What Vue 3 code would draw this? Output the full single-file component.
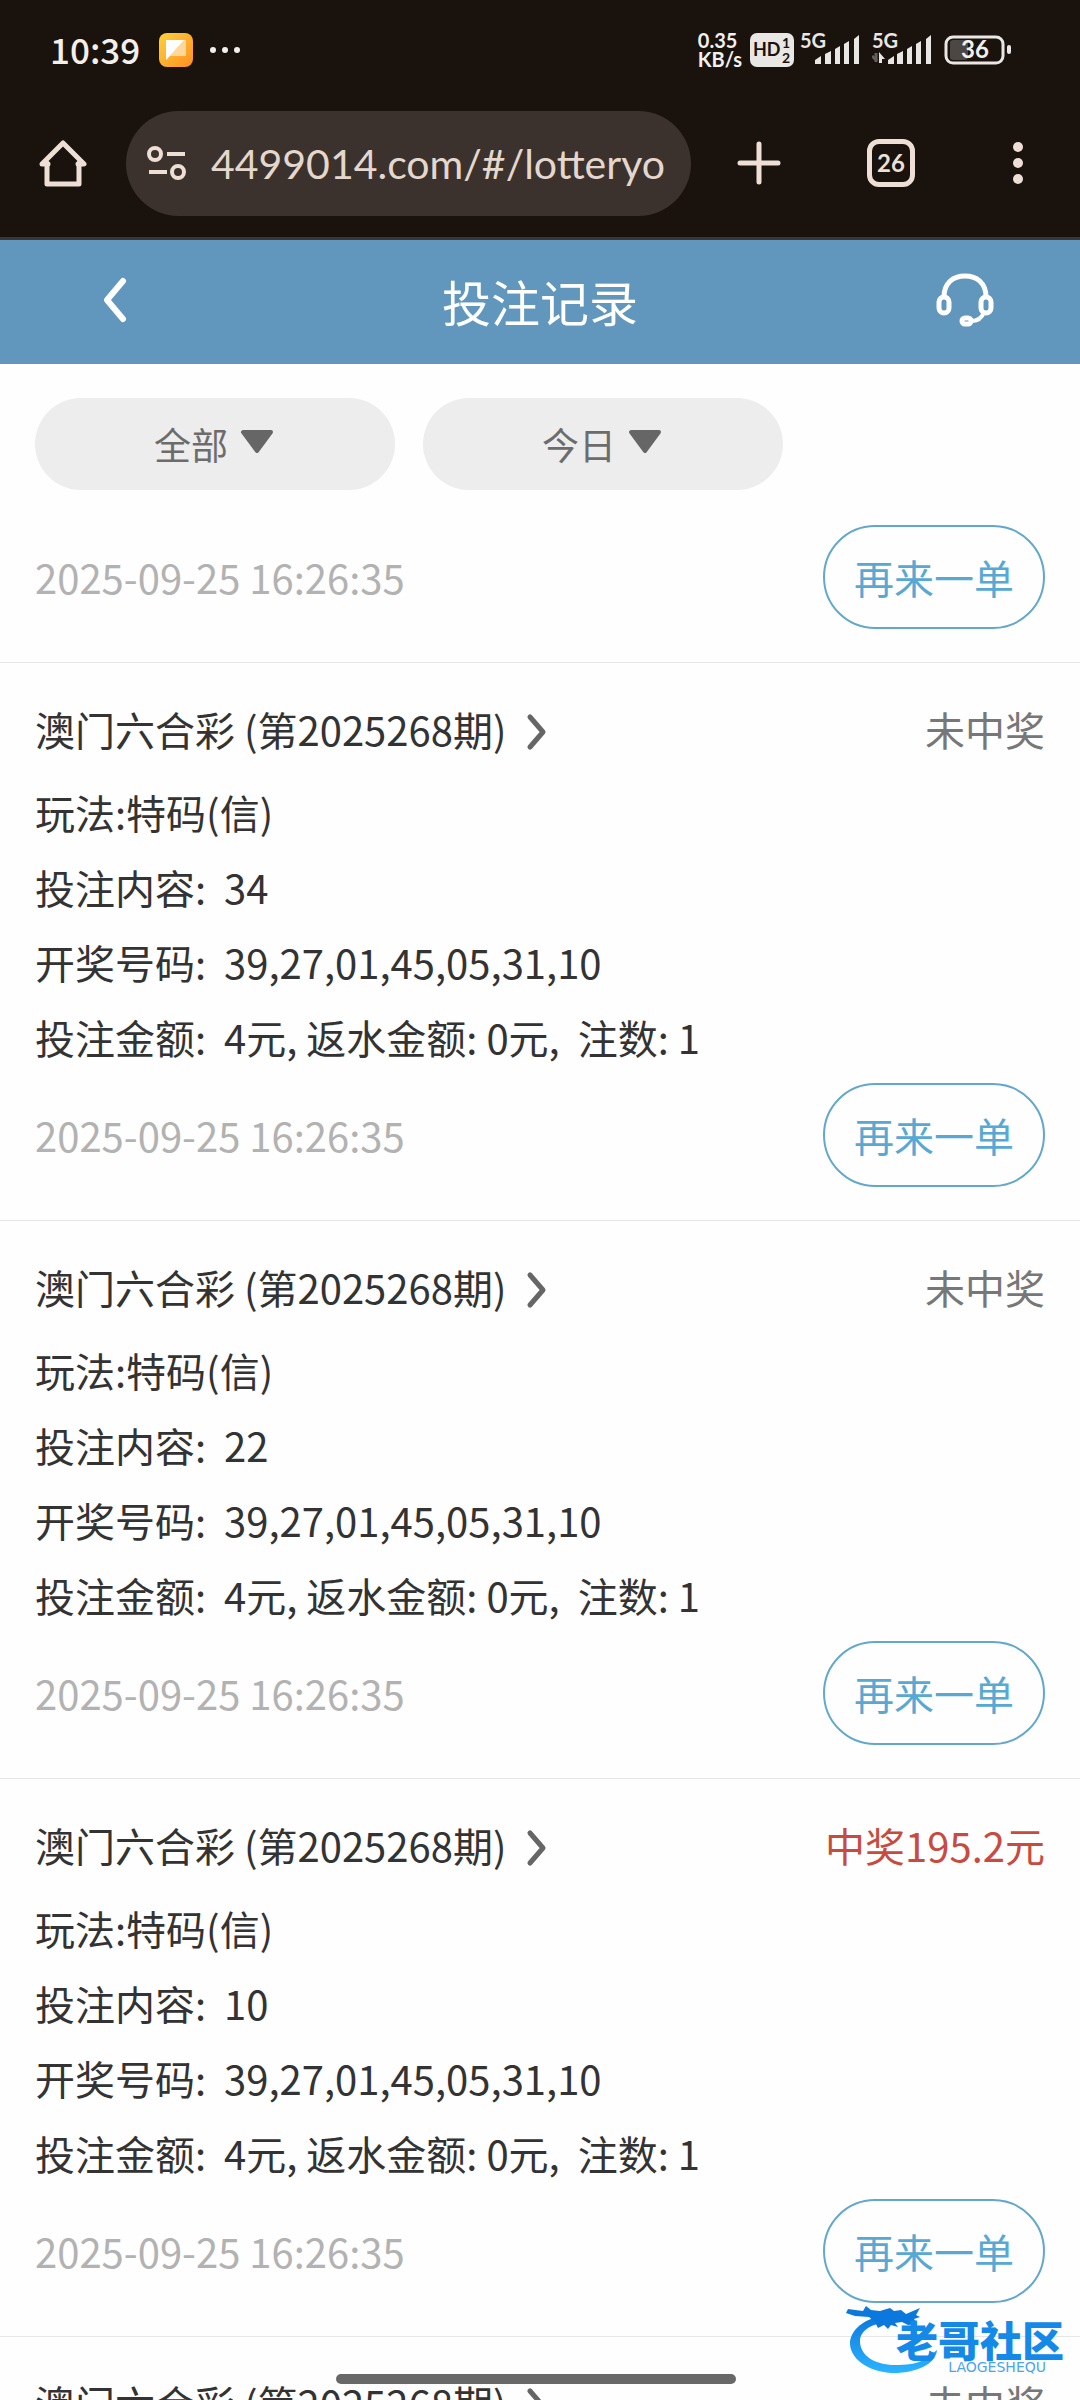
<script setup>
import { ref } from 'vue'

const url = ref('4499014.com/#/lotteryo')
const category = ref('全部')
const day = ref('今日')

const bet = (number, result, won = false) => ({
  title: '澳门六合彩 (第2025268期)',
  play: '特码(信)',
  number,
  draw: '39,27,01,45,05,31,10',
  result,
  won,
  time: '2025-09-25 16:26:35',
})

const previous = { time: '2025-09-25 16:26:35' }
const bets = [
  bet('34', '未中奖'),
  bet('22', '未中奖'),
  bet('10', '中奖195.2元', true),
]
const next = { title: '澳门六合彩 (第2025268期)', result: '未中奖' }
</script>

<template>
  <div class="screen">
    <div class="statusbar">
      <span class="clock">10:39</span>
      <svg class="app" width="34" height="34" viewBox="0 0 34 34">
        <defs>
          <linearGradient id="appfill" x1="0" y1="0" x2="1" y2="1">
            <stop offset="0" stop-color="#ffd13a" />
            <stop offset="1" stop-color="#ff8f22" />
          </linearGradient>
        </defs>
        <rect width="34" height="34" rx="8" fill="url(#appfill)" />
        <path d="M7 7h20v16H11l-4 4z" fill="#ffd79a" />
        <path d="M7 7h18L7 27z" fill="#fff" />
      </svg>
      <svg class="more" width="32" height="8" viewBox="0 0 32 8" fill="#f3f0ec">
        <circle cx="4" cy="4" r="3" /><circle cx="16" cy="4" r="3" /><circle cx="28" cy="4" r="3" />
      </svg>
      <span class="speed"><span>0.35</span><span>KB/s</span></span>
      <svg class="hd" width="44" height="34" viewBox="0 0 44 34">
        <rect width="44" height="34" rx="7" fill="#e9e7e3" />
        <g fill="#19120d" font-weight="700">
          <text x="3" y="23" font-size="18">HD</text>
          <text x="32" y="15" font-size="14">1</text>
          <text x="32" y="30" font-size="14">2</text>
        </g>
      </svg>
      <svg class="signal" width="60" height="38" viewBox="0 -2 60 38" fill="#e9e7e3">
        <text x="0" y="15" font-size="20" font-weight="700">5G</text>
        <path d="M15 31v-4l6-4v8zM25 31V21l6-3v13zM35 31V16l5-3v18zM44 31V11l5-3v23zM54 31V6l5-4v29z" />
      </svg>
      <svg class="signal" width="60" height="38" viewBox="0 -2 60 38" fill="#e9e7e3">
        <text x="0" y="15" font-size="20" font-weight="700">5G</text>
        <path d="M4 20v9M5 28l-5-5" stroke="#625e5a" stroke-width="3" fill="none" />
        <path d="M7 19l6 7h-3v4H7z" />
        <path d="M16 31v-4l6-4v8zM25 31V21l6-3v13zM35 31V16l5-3v18zM44 31V11l5-3v23zM54 31V6l5-4v29z" />
      </svg>
      <svg class="battery" width="68" height="30" viewBox="0 0 68 30">
        <rect x="6" y="5" width="18" height="20" rx="3" fill="#4b4743" />
        <rect x="2" y="2" width="57" height="26" rx="7" fill="none" stroke="#e9e7e3" stroke-width="3" />
        <rect x="63" y="10" width="4" height="9" rx="2" fill="#e9e7e3" />
        <text x="31" y="23" font-size="24" font-weight="700" text-anchor="middle" fill="#f3f0ec">36</text>
      </svg>
    </div>

    <div class="toolbar">
      <button class="home" type="button" aria-label="主页">
        <svg width="48" height="48" viewBox="0 0 48 48" fill="none" stroke="#eedfd6" stroke-width="5" stroke-linejoin="round" stroke-linecap="round">
          <path d="M8 24v21h32V24" />
          <path d="M9 25H3L24 4l21 21h-6" />
        </svg>
      </button>
      <label class="omnibox">
        <svg width="40" height="36" viewBox="0 0 40 36" fill="none" stroke="#eedfd6" stroke-width="4">
          <circle cx="8" cy="9" r="6" /><path d="M20 9h18M2 27h18" /><circle cx="31" cy="27" r="6" />
        </svg>
        <input v-model="url" type="text" aria-label="网址" />
      </label>
      <button class="plus" type="button" aria-label="新标签页">
        <svg width="44" height="44" viewBox="0 0 44 44" stroke="#eedfd6" stroke-width="5" stroke-linecap="round">
          <path d="M22 3v38M3 22h38" />
        </svg>
      </button>
      <button class="tabs" type="button" aria-label="标签页"><span>26</span></button>
      <button class="menu" type="button" aria-label="菜单">
        <svg width="12" height="44" viewBox="0 0 12 44" fill="#eedfd6">
          <circle cx="6" cy="6" r="5" /><circle cx="6" cy="22" r="5" /><circle cx="6" cy="38" r="5" />
        </svg>
      </button>
    </div>

    <header class="header">
      <button class="back" type="button" aria-label="返回">
        <svg width="24" height="46" viewBox="0 0 24 46" fill="none" stroke="#fff" stroke-width="6" stroke-linecap="round" stroke-linejoin="round">
          <path d="M20 4L4 23l16 19" />
        </svg>
      </button>
      <h1>投注记录</h1>
      <button class="service" type="button" aria-label="客服">
        <svg width="58" height="54" viewBox="0 0 58 54" fill="none" stroke="#fff" stroke-width="5">
          <path d="M8 24C8 10 17 3 29 3s21 7 21 21" />
          <rect x="3" y="24" width="10" height="16" rx="5" />
          <rect x="45" y="24" width="10" height="16" rx="5" />
          <rect x="26" y="45" width="9" height="6" rx="3" />
          <path d="M35 48c7 0 11-3 13-9" stroke-width="4" />
        </svg>
      </button>
    </header>

    <main>
      <div class="filters">
        <label class="pill">
          <select v-model="category" aria-label="类型">
            <option>全部</option>
          </select>
          <svg class="caret" width="34" height="26" viewBox="0 0 34 26"><path d="M3 3h28L17 22z" fill="#666" stroke="#666" stroke-width="4" stroke-linejoin="round" /></svg>
        </label>
        <label class="pill">
          <select v-model="day" aria-label="日期">
            <option>今日</option>
          </select>
          <svg class="caret" width="34" height="26" viewBox="0 0 34 26"><path d="M3 3h28L17 22z" fill="#666" stroke="#666" stroke-width="4" stroke-linejoin="round" /></svg>
        </label>
      </div>

      <article class="bet">
        <div class="foot">
          <time>{{ previous.time }}</time>
          <button class="again" type="button">再来一单</button>
        </div>
      </article>

      <article v-for="(b, i) in bets" :key="i" class="bet full">
        <div class="head">
          <a href="#">
            {{ b.title }}
            <svg width="22" height="38" viewBox="0 0 22 38" fill="none" stroke="#666" stroke-width="5" stroke-linecap="round" stroke-linejoin="round">
              <path d="M4 4l13 15L4 34" />
            </svg>
          </a>
          <span class="result" :class="{ won: b.won }">{{ b.result }}</span>
        </div>
        <p>玩法:{{ b.play }}</p>
        <p>投注内容:&nbsp; {{ b.number }}</p>
        <p>开奖号码:&nbsp; {{ b.draw }}</p>
        <p>投注金额:&nbsp; 4元, 返水金额: 0元,&nbsp; 注数: 1</p>
        <div class="foot">
          <time>{{ b.time }}</time>
          <button class="again" type="button">再来一单</button>
        </div>
      </article>

      <article class="bet full">
        <div class="head">
          <a href="#">
            {{ next.title }}
            <svg width="22" height="38" viewBox="0 0 22 38" fill="none" stroke="#666" stroke-width="5" stroke-linecap="round" stroke-linejoin="round">
              <path d="M4 4l13 15L4 34" />
            </svg>
          </a>
          <span class="result">{{ next.result }}</span>
        </div>
      </article>
    </main>

    <div class="watermark">
      <svg width="96" height="72" viewBox="0 0 96 72">
        <defs>
          <linearGradient id="wave" x1="0" y1="0" x2="0" y2="1">
            <stop offset="0" stop-color="#0b78de" />
            <stop offset="1" stop-color="#2bb4ff" />
          </linearGradient>
        </defs>
        <path fill="url(#wave)" d="M34 12C14 17 4 28 4 40c1 18 24 30 48 29 24-2 38-11 39-23l-6 5c-6 6-17 10-33 10-22 1-38-9-38-24 0-9 10-17 24-18z" />
        <path fill="#0b78de" d="M2 5l15 2 3-5 5 4 9 1 10-3 4 3 7-1 5 4 14-6-4 7 4 2-6 2 3 5-9 1-6-3-7 1 3 4-7-2-3 4-4-4-6 3-3-6-6-5-14-1-9-3z" />
      </svg>
      <div class="brand">
        <strong>老哥社区</strong>
        <small>LAOGESHEQU</small>
      </div>
    </div>
    <div class="gesture"></div>
  </div>
</template>

<style>
body {
  margin: 0;
  background: #fff;
}
</style>

<style scoped>
.screen {
  position: relative;
  height: 100vh;
  overflow: hidden;
  background: #fefefe;
  color: #333;
  font-family: "Noto Sans CJK SC", sans-serif;
  font-size: 40px;
}
button {
  padding: 0;
  border: 0;
  background: none;
  font-family: inherit;
  display: flex;
  align-items: center;
  justify-content: center;
}
svg {
  display: block;
  flex: none;
}
.statusbar {
  display: flex;
  align-items: center;
  box-sizing: border-box;
  height: 100px;
  padding: 0 68px 0 50px;
  background: #19120d;
  color: #f3f0ec;
  font-family: Lato, sans-serif;
}
.clock {
  width: 109px;
  padding-bottom: 4px;
  font-family: "Noto Sans CJK SC", sans-serif;
  font-size: 35px;
  font-weight: 500;
}
.more {
  margin-left: 16px;
}
.speed {
  display: flex;
  flex-direction: column;
  margin-left: auto;
  font-size: 20px;
  line-height: 19px;
  font-weight: 700;
}
.hd {
  margin-left: 8px;
}
.signal {
  margin-left: 6px;
}
.signal + .signal {
  margin-left: 12px;
}
.battery {
  margin-left: 12px;
}
.toolbar {
  display: flex;
  align-items: center;
  height: 126px;
  padding: 0 0 11px;
  background: #19120d;
  border-bottom: 3px solid #3a3835;
}
.home {
  width: 126px;
}
.omnibox {
  flex: 1;
  min-width: 0;
  box-sizing: border-box;
  height: 105px;
  display: flex;
  align-items: center;
  gap: 24px;
  padding: 0 12px 0 21px;
  border-radius: 53px;
  background: #3c322d;
}
.omnibox input {
  flex: 1;
  min-width: 0;
  padding: 0;
  border: 0;
  outline: 0;
  background: none;
  color: #e4d7ce;
  font-family: Lato, sans-serif;
  font-size: 41px;
}
.plus {
  width: 136px;
}
.tabs {
  width: 128px;
}
.tabs span {
  box-sizing: border-box;
  width: 48px;
  height: 48px;
  border: 5px solid #eedfd6;
  border-radius: 12px;
  color: #eedfd6;
  font-family: Lato, sans-serif;
  font-size: 24px;
  line-height: 38px;
  font-weight: 700;
}
.menu {
  width: 125px;
}
.header {
  display: grid;
  grid-template-columns: 230px 1fr 230px;
  align-items: center;
  box-sizing: border-box;
  height: 124px;
  padding-bottom: 4px;
  background: #6197bc;
  color: #fff;
}
.header h1 {
  margin: 0;
  text-align: center;
  font-size: 49px;
  font-weight: 400;
}
.filters {
  display: flex;
  gap: 28px;
  padding: 34px 35px 35px;
}
.pill {
  position: relative;
  width: 360px;
  height: 92px;
}
.pill select {
  appearance: none;
  width: 100%;
  height: 100%;
  padding: 0 0 0 119px;
  border: 0;
  border-radius: 46px;
  background: #ededed;
  color: #6c6c6c;
  font-family: inherit;
  font-size: 37px;
}
.caret {
  position: absolute;
  left: 205px;
  top: 31px;
  pointer-events: none;
}
.bet {
  padding: 0 35px 33px;
  border-bottom: 1px solid #e6e6e6;
}
.full {
  padding-top: 20px;
}
.head {
  display: flex;
  align-items: center;
  justify-content: space-between;
  height: 92px;
}
.head a {
  display: flex;
  align-items: center;
  gap: 20px;
  color: inherit;
  text-decoration: none;
}
.head svg {
  margin-top: 6px;
}
.result {
  color: #777;
}
.won {
  color: #c84b40;
}
.bet p {
  margin: 0;
  line-height: 75px;
}
.foot {
  display: flex;
  align-items: center;
  justify-content: space-between;
}
.full .foot {
  margin-top: 8px;
}
time {
  color: #b2b2b2;
}
.again {
  box-sizing: border-box;
  height: 104px;
  padding: 0 29px;
  border: 2px solid #63a8cc;
  border-radius: 52px;
  color: #57a9d3;
  font-size: 40px;
}
.watermark {
  position: absolute;
  right: 16px;
  bottom: 24px;
  display: flex;
}
.brand {
  display: flex;
  flex-direction: column;
  align-items: flex-end;
  margin: 14px 0 0 -46px;
  color: #1489e8;
}
.brand strong {
  font-size: 42px;
  font-weight: 900;
  line-height: 42px;
}
.brand small {
  margin-right: 18px;
  font-family: "DejaVu Sans", sans-serif;
  font-size: 14px;
  line-height: 14px;
  color: #4aa5ec;
}
.gesture {
  position: absolute;
  left: 50%;
  bottom: 16px;
  width: 400px;
  height: 10px;
  margin-left: -204px;
  border-radius: 5px;
  background: #686868;
}
</style>
